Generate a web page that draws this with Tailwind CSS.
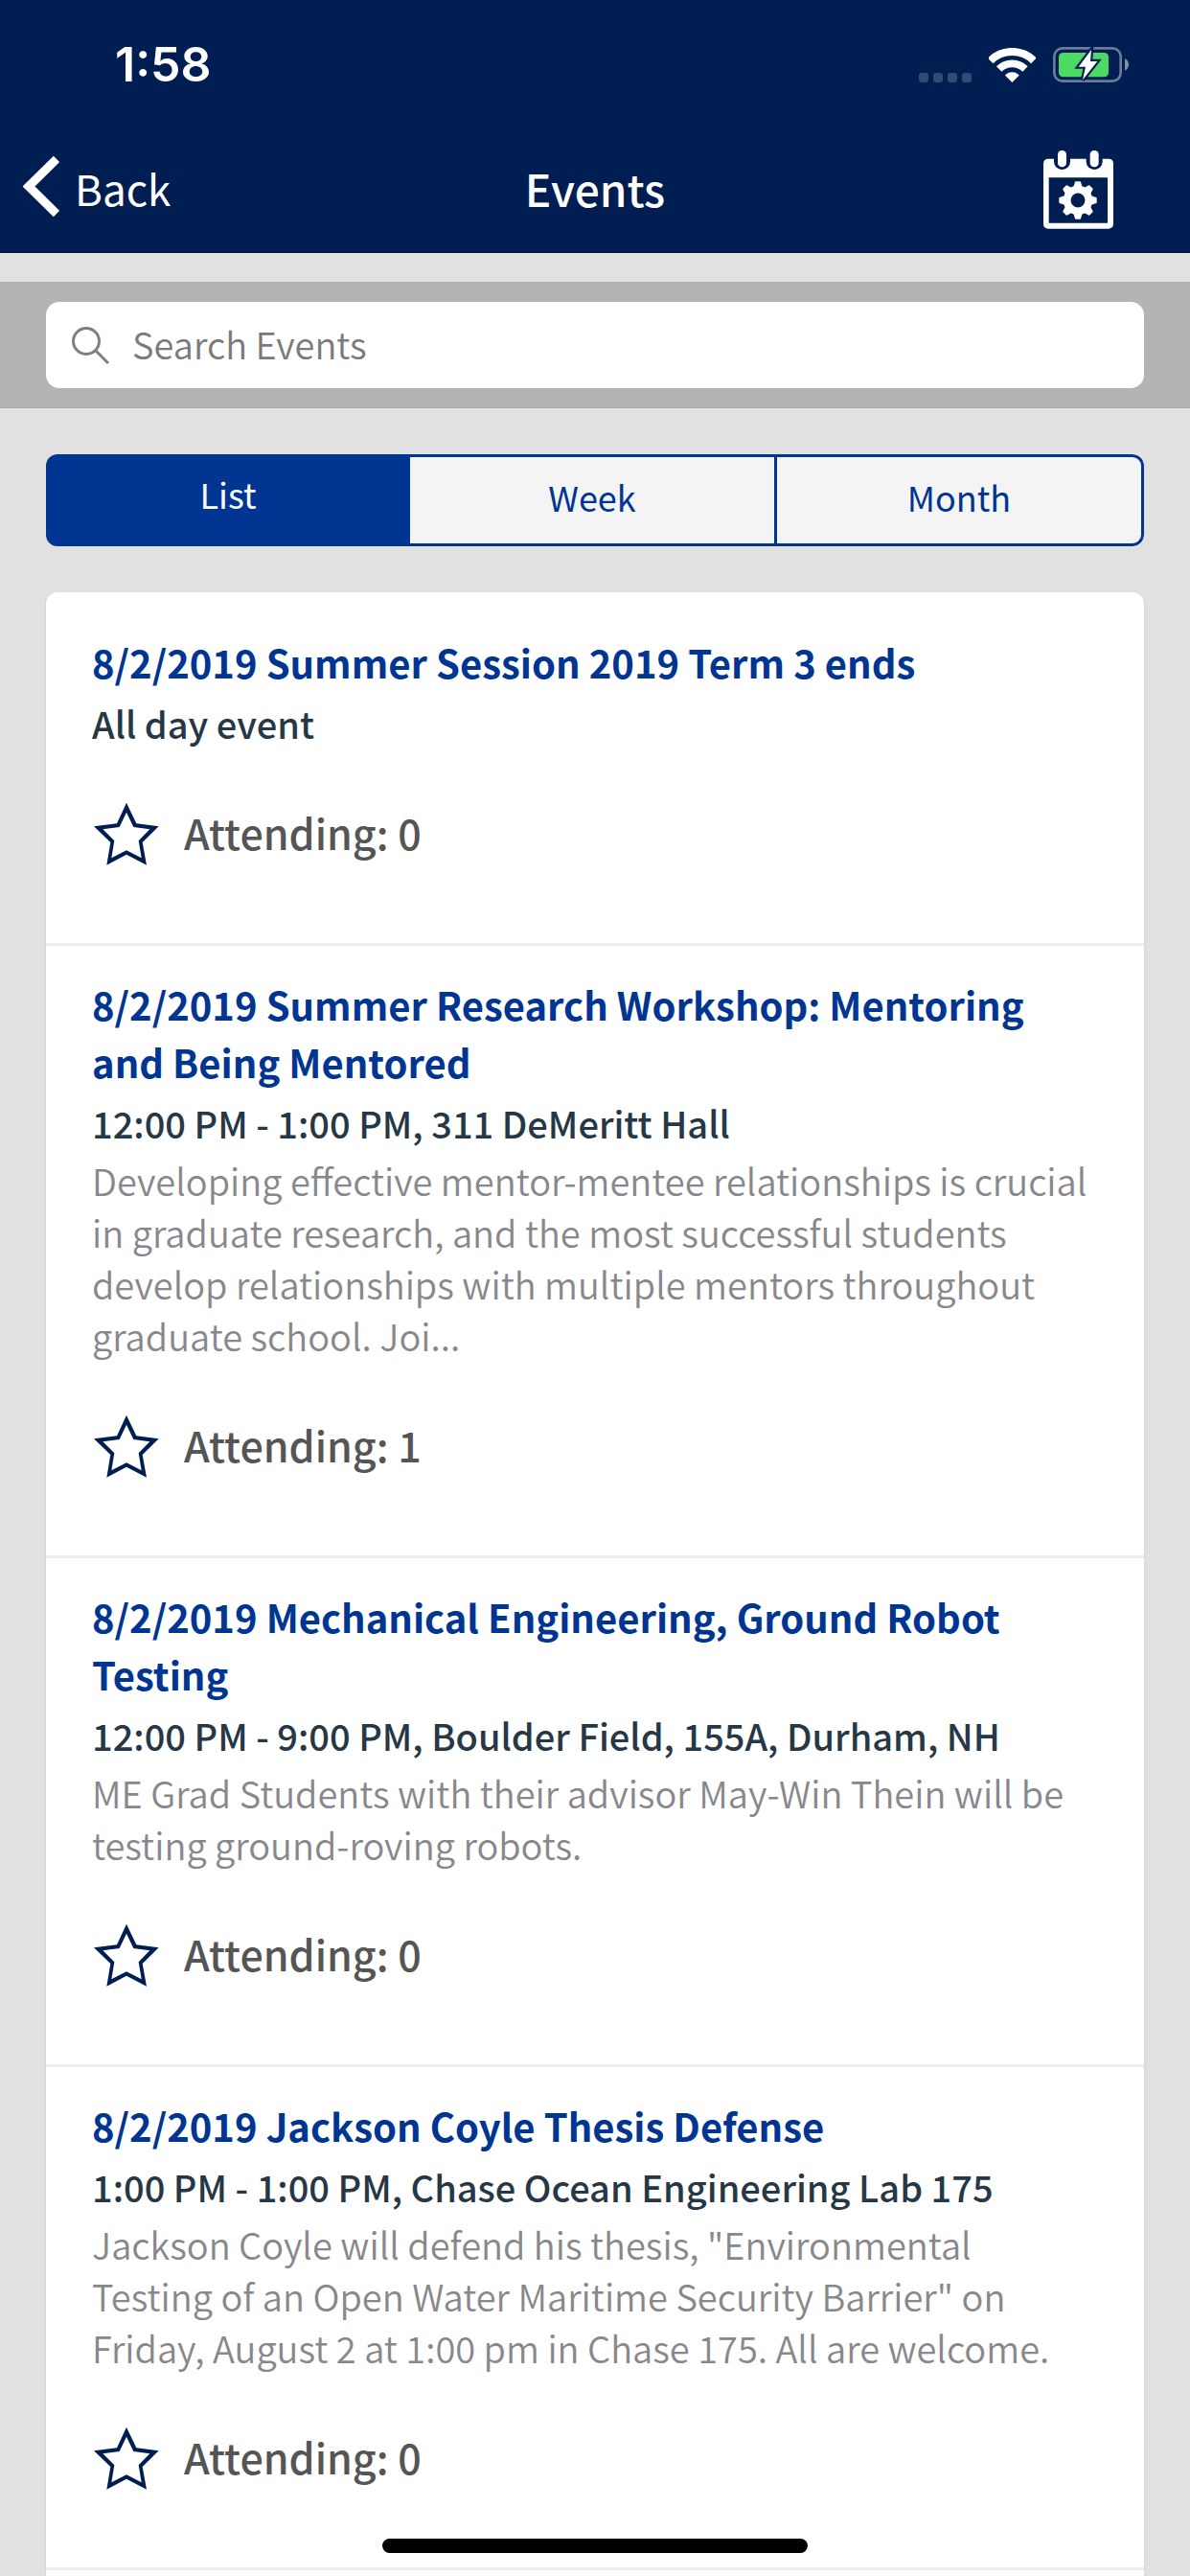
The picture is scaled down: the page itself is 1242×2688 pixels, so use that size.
<!DOCTYPE html>
<html lang="en">
<head>
<meta charset="utf-8">
<meta name="viewport" content="width=device-width, initial-scale=1">
<title>Events</title>
<script src="https://cdn.jsdelivr.net/npm/@tailwindcss/browser@4"></script>
</head>
<body class="flex min-h-screen flex-col bg-[#e1e1e1] font-['Noto_Sans_CJK_SC','Noto_Sans',sans-serif] text-[#263746]">
<svg class="hidden" aria-hidden="true">
  <symbol id="star" viewBox="48 36 210 216">
    <path fill-rule="evenodd" d="M156 53 187 118 257 127 206 177 219 248 156 215 94 248 106 177 54 127 126 118ZM156 83 178 129 229 136 194 172 203 226 156 202 109 226 118 172 82 136 134 129Z"/>
  </symbol>
</svg>

<header class="border-b border-[#00133a] bg-[#001e52] text-white">
  <div class="flex h-[134px] items-center justify-between pr-16 pl-[120px]">
    <span class="font-[Inter,sans-serif] text-[50px] font-semibold">1:58</span>
    <div class="flex items-end">
      <div class="flex gap-[5px]">
        <span class="size-[10px] rounded-[3px] bg-white/20"></span>
        <span class="size-[10px] rounded-[3px] bg-white/20"></span>
        <span class="size-[10px] rounded-[3px] bg-white/20"></span>
        <span class="size-[10px] rounded-[3px] bg-white/20"></span>
      </div>
      <svg class="ml-[18px] h-9 w-[49px]" viewBox="393 87 147 108" fill="none" stroke="white" aria-label="Wi-Fi">
        <path stroke-width="24" d="M398 127A96 96 0 0 1 534 127"/>
        <path stroke-width="23" d="M425 153A58 58 0 0 1 507 153"/>
        <path fill="white" stroke="none" d="M466 195 445 174Q443 171 446 170A31 31 0 0 1 486 170Q489 171 487 174Z"/>
      </svg>
      <svg class="ml-[18px] h-[37px] w-[79px]" viewBox="594 87 237 111" aria-label="Battery charging">
        <rect x="598" y="91" width="208" height="103" rx="26" fill="none" stroke="white" stroke-opacity=".42" stroke-width="8"/>
        <path fill="white" fill-opacity=".5" d="M819 123Q831 130 831 142T819 162Z"/>
        <rect x="612" y="105" width="156" height="76" rx="14" fill="#4cd964"/>
        <path d="M714 96 674 149H696L687 190 733 132H711Z" fill="white" stroke="#001e52" stroke-width="13" paint-order="stroke"/>
      </svg>
    </div>
  </div>
  <nav class="grid h-[129px] grid-cols-3 items-center pr-20 pb-[6px] pl-6">
    <a href="#" class="flex items-center gap-4 text-[44px] leading-[66px]">
      <svg class="h-[66px] w-[38px]" viewBox="0 0 38 66" fill="none" stroke="white" stroke-width="9" aria-hidden="true">
        <path d="M35 3 6 31.500 35 60"/>
      </svg>
      Back
    </a>
    <h1 class="ml-14 text-center text-[46px] leading-[66px] font-medium">Events</h1>
    <button type="button" aria-label="Calendar settings" class="justify-self-end">
      <svg class="block h-[86px] w-[73px]" viewBox="567 399 219 258" fill="white">
        <path fill-rule="evenodd" d="M583 437H770Q786 437 786 453V640Q786 656 770 656H583Q567 656 567 640V453Q567 437 583 437ZM584 496V638H768V496Z"/>
        <g fill="#001e52"><rect x="600" y="400" width="51" height="71" rx="25"/><rect x="701" y="400" width="51" height="71" rx="25"/></g>
        <rect x="612" y="411" width="27" height="52" rx="13"/>
        <rect x="713" y="411" width="27" height="52" rx="13"/>
        <g transform="translate(675 567)">
          <circle r="34" fill="none" stroke="white" stroke-width="23"/>
          <g stroke="white" stroke-width="4" stroke-linejoin="round">
            <path d="M-7-57H7L12-41H-12Z"/>
            <path d="M-7-57H7L12-41H-12Z" transform="rotate(45)"/>
            <path d="M-7-57H7L12-41H-12Z" transform="rotate(90)"/>
            <path d="M-7-57H7L12-41H-12Z" transform="rotate(135)"/>
            <path d="M-7-57H7L12-41H-12Z" transform="rotate(180)"/>
            <path d="M-7-57H7L12-41H-12Z" transform="rotate(225)"/>
            <path d="M-7-57H7L12-41H-12Z" transform="rotate(270)"/>
            <path d="M-7-57H7L12-41H-12Z" transform="rotate(315)"/>
          </g>
        </g>
      </svg>
    </button>
  </nav>
</header>

<main class="flex flex-1 flex-col pt-[30px]">
  <form class="border-b border-[#a9a9a9] bg-[#b4b4b4] px-12 pt-[21px] pb-5">
    <label class="flex h-[90px] items-center gap-6 rounded-[14px] bg-white pl-[27px]">
      <svg class="size-[39px] shrink-0" viewBox="0 0 39 39" fill="none" stroke="#7f7f7f" stroke-width="3" aria-hidden="true">
        <circle cx="15" cy="15" r="13.500"/>
        <path d="M25 25 38 38"/>
      </svg>
      <input type="search" aria-label="Search Events" placeholder="Search Events" class="min-w-0 flex-1 bg-transparent pb-0.5 text-[38px] leading-[54px] font-[350] outline-none placeholder:text-[#7a7a7a]">
    </label>
  </form>

  <div class="mx-12 mt-12 flex h-24 overflow-hidden rounded-xl text-[36px] text-[#003591]">
    <button type="button" aria-pressed="true" class="flex-1 bg-[#003591] pb-[14px] text-white">List</button>
    <button type="button" aria-pressed="false" class="flex-1 border-y-3 border-r-3 border-[#003591] bg-[#f4f4f4] pb-2">Week</button>
    <button type="button" aria-pressed="false" class="flex-1 rounded-r-xl border-y-3 border-r-3 border-[#003591] bg-[#f4f4f4] pb-2">Month</button>
  </div>

  <section class="mx-12 mt-12 flex-1 rounded-t-xl bg-white pt-3 shadow-sm">
    <article class="border-b-3 border-[#ededed] px-12 pt-[31px] pb-20">
      <h2 class="text-[40px] leading-[60px] font-bold text-[#003591]">8/2/2019 Summer Session 2019 Term 3 ends</h2>
      <p class="mt-[7px] text-[38px] leading-[54px] font-medium">All day event</p>
      <button type="button" class="mt-[50px] flex h-[72px] items-center gap-[26px] text-[43px] leading-[72px] font-medium text-[#555]">
        <svg class="h-[72px] w-[70px] fill-[#001e52]" aria-hidden="true"><use href="#star"/></svg>Attending: 0
      </button>
    </article>

    <article class="border-b-3 border-[#ededed] px-12 pt-[31px] pb-20">
      <h2 class="text-[40px] leading-[60px] font-bold text-[#003591]">8/2/2019 Summer Research Workshop: Mentoring and Being Mentored</h2>
      <p class="mt-[7px] text-[38px] leading-[54px] font-medium">12:00 PM - 1:00 PM, 311 DeMeritt Hall</p>
      <p class="mt-[6px] text-[38px] leading-[54px] font-[350] text-[#88888c]">Developing effective mentor-mentee relationships is crucial in graduate research, and the most successful students develop relationships with multiple mentors throughout graduate school. Joi...</p>
      <button type="button" class="mt-[50px] flex h-[72px] items-center gap-[26px] text-[43px] leading-[72px] font-medium text-[#555]">
        <svg class="h-[72px] w-[70px] fill-[#001e52]" aria-hidden="true"><use href="#star"/></svg>Attending: 1
      </button>
    </article>

    <article class="border-b-3 border-[#ededed] px-12 pt-[31px] pb-20">
      <h2 class="text-[40px] leading-[60px] font-bold text-[#003591]">8/2/2019 Mechanical Engineering, Ground Robot Testing</h2>
      <p class="mt-[7px] text-[38px] leading-[54px] font-medium">12:00 PM - 9:00 PM, Boulder Field, 155A, Durham, NH</p>
      <p class="mt-[6px] text-[38px] leading-[54px] font-[350] text-[#88888c]">ME Grad Students with their advisor May-Win Thein will be testing ground-roving robots.</p>
      <button type="button" class="mt-[50px] flex h-[72px] items-center gap-[26px] text-[43px] leading-[72px] font-medium text-[#555]">
        <svg class="h-[72px] w-[70px] fill-[#001e52]" aria-hidden="true"><use href="#star"/></svg>Attending: 0
      </button>
    </article>

    <article class="border-b-3 border-[#ededed] px-12 pt-[31px] pb-20">
      <h2 class="text-[40px] leading-[60px] font-bold text-[#003591]">8/2/2019 Jackson Coyle Thesis Defense</h2>
      <p class="mt-[7px] text-[38px] leading-[54px] font-medium">1:00 PM - 1:00 PM, Chase Ocean Engineering Lab 175</p>
      <p class="mt-[6px] text-[38px] leading-[54px] font-[350] text-[#88888c]">Jackson Coyle will defend his thesis, "Environmental Testing of an Open Water Maritime Security Barrier" on Friday, August 2 at 1:00 pm in Chase 175. All are welcome.</p>
      <button type="button" class="mt-[50px] flex h-[72px] items-center gap-[26px] text-[43px] leading-[72px] font-medium text-[#555]">
        <svg class="h-[72px] w-[70px] fill-[#001e52]" aria-hidden="true"><use href="#star"/></svg>Attending: 0
      </button>
    </article>
  </section>
</main>

<div class="fixed bottom-6 left-1/2 h-[15px] w-[444px] -translate-x-1/2 rounded-full bg-black"></div>
</body>
</html>
